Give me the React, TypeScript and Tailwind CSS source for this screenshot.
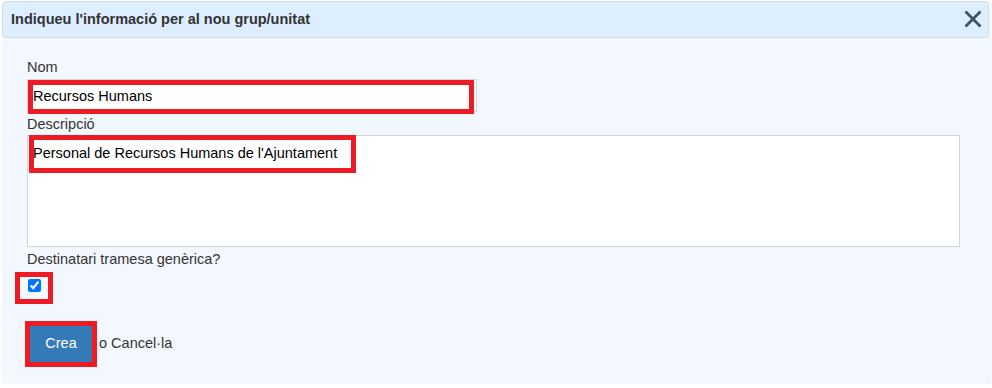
import { useState } from "react";

export default function App() {
  const [nom, setNom] = useState("Recursos Humans");
  const [desc, setDesc] = useState("Personal de Recursos Humans de l'Ajuntament");
  const [generic, setGeneric] = useState(true);

  return (
    <div className="w-[992px] h-[388px] bg-white pl-[2px] pt-[1px] font-['Liberation_Sans',Arial,sans-serif]">
      <div className="h-[383px] bg-[#f3f8fe] rounded-[4px]">
        {/* capçalera */}
        <div className="h-[37px] mr-[3px] flex items-center justify-between bg-[#ddeeff] border border-[#d2dae2] rounded-[4px] pl-[8px] pr-[6px]">
          <h2 className="text-[14.5px] font-bold text-[#333]">Indiqueu l'informació per al nou grup/unitat</h2>
          <button className="w-[18px] h-[18px] mb-[1px]">
            <svg viewBox="0 0 18 18" width="18" height="18">
              <path d="M1.5 1.5 L16.5 16.5 M16.5 1.5 L1.5 16.5" stroke="#3d5266" strokeWidth="2.8" strokeLinecap="butt" />
            </svg>
          </button>
        </div>

        {/* formulari */}
        <div className="pl-[25px] pt-[21px] text-[14.5px] text-[#333]">
          <label className="block leading-[16px] mb-[4px]">Nom</label>
          <div className="relative w-[450px] h-[33px]">
            <input
              value={nom}
              onChange={(e) => setNom(e.target.value)}
              className="w-full h-full bg-white border border-[#d5d5d5] pl-[5px] text-black outline-none"
            />
            <div className="absolute left-[1px] top-[1px] w-[446px] h-[34px] border-[5px] border-[#ed1c24] pointer-events-none" />
          </div>

          <label className="block leading-[16px] pt-[4px] pb-[3px]">Descripció</label>
          <div className="relative w-[933px] h-[112px]">
            <textarea
              value={desc}
              onChange={(e) => setDesc(e.target.value)}
              className="w-full h-full bg-white border border-[#d5d5d5] pl-[5px] pt-[7px] text-black outline-none resize-none"
            />
            <div className="absolute left-[2px] top-0 w-[327px] h-[38px] border-[5px] border-[#ed1c24] pointer-events-none" />
          </div>

          <label className="block leading-[16px] mt-[4px]">Destinatari tramesa genèrica?</label>
          <div className="relative w-[13px] h-[13px] mt-[12px] ml-[1px]">
            <input
              type="checkbox"
              checked={generic}
              onChange={(e) => setGeneric(e.target.checked)}
              className="block w-[13px] h-[13px] m-0"
            />
            <div className="absolute left-[-13px] top-[-7px] w-[38px] h-[32px] border-[5px] border-[#ed1c24] pointer-events-none" />
          </div>

          <div className="flex items-center mt-[34px]">
            <div className="relative ml-[3px]">
              <button className="w-[62px] h-[36px] bg-[#337ab7] text-white">Crea</button>
              <div className="absolute -inset-[5px] border-[5px] border-[#ed1c24] pointer-events-none" />
            </div>
            <span className="ml-[7px]">
              o <a className="text-[#333]">Cancel·la</a>
            </span>
          </div>
        </div>
      </div>
    </div>
  );
}
